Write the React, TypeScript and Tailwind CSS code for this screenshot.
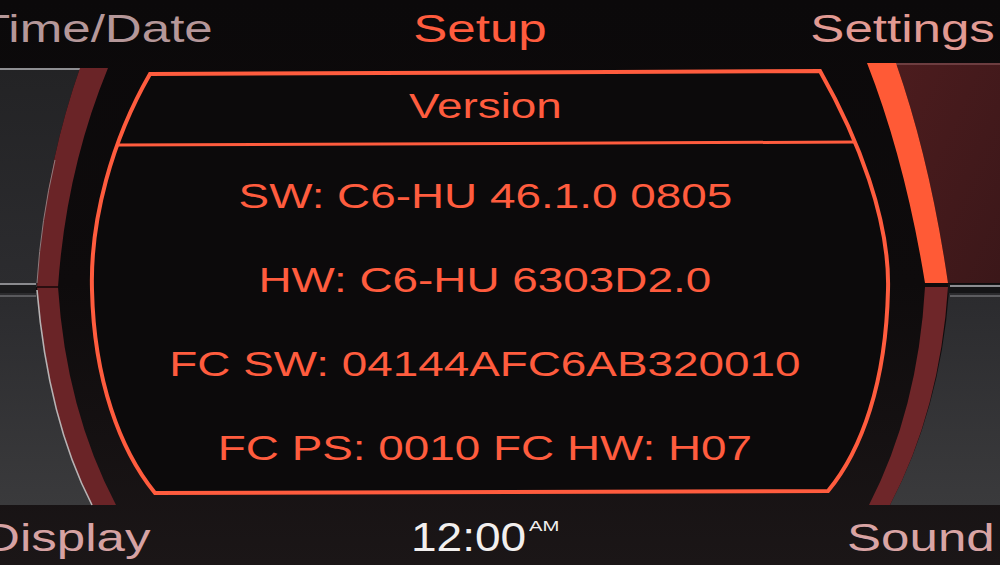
import React from 'react';

const RED = '#ff5c3e';

const Bezel: React.FC = () => (
    <svg className="absolute inset-0 h-full w-full" viewBox="0 0 1000 565" preserveAspectRatio="none">
        <defs>
            <linearGradient id="grayTop" x1="0" y1="0" x2="0" y2="1">
                <stop offset="0" stopColor="#232325" />
                <stop offset="1" stopColor="#2c2c2f" />
            </linearGradient>
            <linearGradient id="grayBottom" x1="0" y1="0" x2="0" y2="1">
                <stop offset="0" stopColor="#2b2b2e" />
                <stop offset="1" stopColor="#3a3a3c" />
            </linearGradient>
            <linearGradient id="maroon" x1="0" y1="0" x2="1" y2="1">
                <stop offset="0" stopColor="#4c1c1e" />
                <stop offset="1" stopColor="#3b1719" />
            </linearGradient>
        </defs>

        {/* left panels */}
        <path d="M0,68 L80,68 Q44,170 37,287 L0,287 Z" fill="url(#grayTop)" />
        <path d="M0,293 L37,293 Q48,420 92,505 L0,505 Z" fill="url(#grayBottom)" />
        <line x1="0" y1="69" x2="80" y2="69" stroke="#8e8e92" strokeWidth="2" />
        <rect x="0" y="283" width="36" height="10" fill="#1a1a1c" />
        <line x1="0" y1="284" x2="36" y2="284" stroke="#8a8a8e" strokeWidth="2" />
        <line x1="0" y1="296" x2="36" y2="296" stroke="#6a6a6e" strokeWidth="1.5" />
        <path d="M80,68 L108,68 Q66,170 58,287 Q66,410 116,505 L92,505 Q48,420 37,287 Q44,170 80,68 Z" fill="#6a2427" />
        <line x1="37" y1="287" x2="58" y2="287" stroke="#2a0e10" strokeWidth="2" />
        <path d="M37,290 Q48,420 92,505" fill="none" stroke="#b7b3b4" strokeWidth="1.6" />
        <path d="M55,160 Q41,220 37,283" fill="none" stroke="#8d7c7e" strokeWidth="1" />

        {/* right panels */}
        <path d="M896,63 L1000,63 L1000,283 L948,283 Q930,160 896,63 Z" fill="url(#maroon)" />
        <line x1="896" y1="64" x2="1000" y2="64" stroke="#7a4a4c" strokeWidth="1.5" />
        <path d="M949,292 L1000,292 L1000,505 L890,505 Q940,410 949,292 Z" fill="url(#grayBottom)" />
        <rect x="948" y="284" width="52" height="9" fill="#151517" />
        <line x1="950" y1="286" x2="1000" y2="286" stroke="#8c8c90" strokeWidth="2" />
        <line x1="950" y1="296" x2="1000" y2="296" stroke="#6e6e72" strokeWidth="1.5" />
        <path d="M867,63 L896,63 Q930,160 948,283 L925,283 Q905,160 867,63 Z" fill="#ff5a36" />
        <path d="M925,287 L948,287 Q940,410 890,505 L869,505 Q918,410 925,287 Z" fill="#6e2629" />

        {/* main frame */}
        <path
            d="M150,74 L820,71 C858,138 890,220 888,290 C886,382 862,450 828,491 L155,493 C120,450 94,380 92,290 C90,220 112,140 150,74 Z"
            fill="#0c0a0b"
            stroke={RED}
            strokeWidth="4"
        />
        <line x1="118" y1="145" x2="856" y2="142" stroke={RED} strokeWidth="3" />
    </svg>
);

const Row: React.FC<{ text: string; className?: string }> = ({ text, className }) => (
    <div className={`flex items-center justify-center ${className ?? 'h-[84px]'}`}>
        <span className="inline-block origin-center scale-x-[1.31] text-[35px] leading-none text-[#ff5c3e]">{text}</span>
    </div>
);

export default function App() {
    return (
        <div className="relative h-[565px] w-[1000px] overflow-hidden bg-gradient-to-b from-[#0b090a] via-[#0e0b0c] to-[#1b1617] font-['Liberation_Sans',Arial,sans-serif]">
            <Bezel />

            <div className="relative z-10 flex h-full flex-col">
                {/* top soft keys */}
                <div className="grid h-[56px] grid-cols-[400px_160px_1fr] items-center text-[39px] leading-none">
                    <span className="ml-[-21px] inline-block origin-left scale-x-[1.31] justify-self-start text-[#b59799]">Time/Date</span>
                    <span className="inline-block origin-center scale-x-[1.31] justify-self-center text-[#ff5c3e]">Setup</span>
                    <span className="mr-[5px] inline-block origin-right scale-x-[1.31] justify-self-end text-[#e29a93]">Settings</span>
                </div>

                {/* version screen */}
                <div className="mt-[14px] flex flex-col pr-[30px]">
                    <Row text="Version" className="h-[70px]" />
                    <div className="h-[13px]" />
                    <Row text="SW: C6-HU 46.1.0 0805" />
                    <Row text="HW: C6-HU 6303D2.0" />
                    <Row text="FC SW: 04144AFC6AB320010" />
                    <Row text="FC PS: 0010 FC HW: H07" />
                </div>

                {/* bottom soft keys */}
                <div className="mt-auto grid h-[56px] grid-cols-[400px_170px_1fr] items-center text-[39px] leading-none">
                    <span className="ml-[-17px] inline-block origin-left scale-x-[1.31] justify-self-start text-[#d6a2a3]">Display</span>
                    <span className="flex items-start justify-self-center pl-[8px] text-[#f2efee]">
                        <span className="inline-block origin-right scale-x-[1.15] text-[40px] leading-none">12:00</span>
                        <span className="ml-[3px] mt-[1px] inline-block origin-left scale-x-[1.35] text-[15px] leading-none">AM</span>
                    </span>
                    <span className="mr-[5px] inline-block origin-right scale-x-[1.31] justify-self-end text-[#d9a4a4]">Sound</span>
                </div>
            </div>
        </div>
    );
}
